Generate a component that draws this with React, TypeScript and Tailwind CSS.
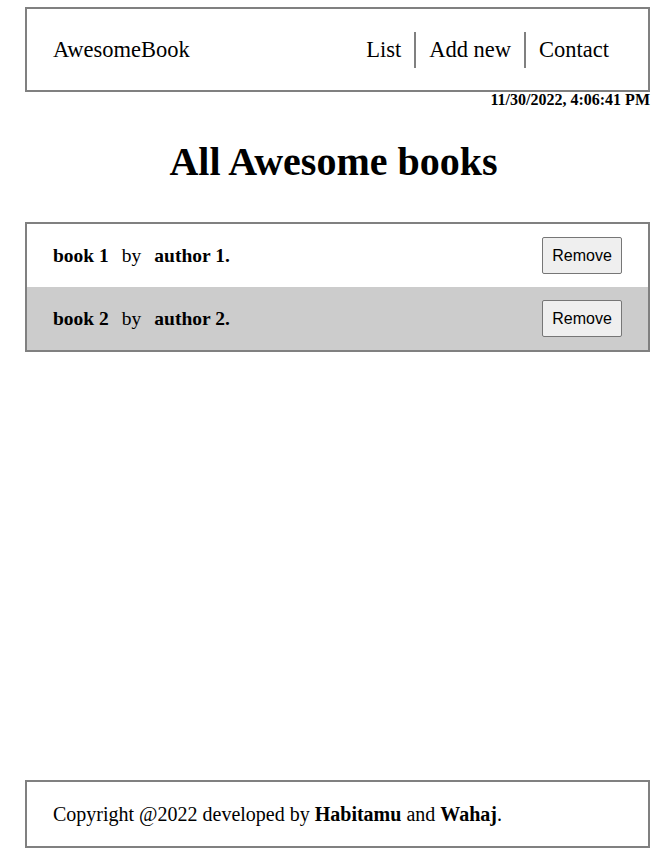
import React from 'react';

const books = [
  { title: 'book 1', author: 'author 1.' },
  { title: 'book 2', author: 'author 2.' },
];

export default function App() {
  return (
    <div className="flex h-[852px] flex-col bg-white text-black font-['Liberation_Serif',serif]">
      <header className="ml-[25px] mt-[7px] flex h-[85px] w-[625px] items-center justify-between border-2 border-[#808080] pl-[26px] pr-[39px]">
        <span className="text-[22.5px]">AwesomeBook</span>
        <nav className="flex items-center text-[22.5px]">
          <a className="pr-[13px]">List</a>
          <span className="h-[36px] w-[2px] bg-[#808080]" />
          <a className="px-[13px]">Add new</a>
          <span className="h-[36px] w-[2px] bg-[#808080]" />
          <a className="pl-[13px]">Contact</a>
        </nav>
      </header>
      <div className="w-[650px] text-right text-[16px] font-bold leading-[16px]">11/30/2022, 4:06:41 PM</div>

      <h1 className="mt-[30px] text-center text-[40px] font-bold leading-[48px]">All Awesome books</h1>

      <section className="ml-[25px] mt-[36px] w-[625px] border-2 border-[#808080]">
        {books.map((b, i) => (
          <div
            key={b.title}
            className={`flex h-[63px] items-center justify-between pl-[26px] pr-[26px] ${i % 2 === 1 ? 'bg-[#cccccc]' : 'bg-white'}`}
          >
            <p className="text-[19.5px]">
              <b>{b.title}</b>
              <span className="px-[13px]">by</span>
              <b>{b.author}</b>
            </p>
            <button className="h-[37px] w-[80px] rounded-[2px] border border-[#767676] bg-[#efefef] font-['Liberation_Sans',sans-serif] text-[16px]">
              Remove
            </button>
          </div>
        ))}
      </section>

      <footer className="mb-[4px] ml-[25px] mt-auto flex h-[68px] w-[625px] items-center border-2 border-[#808080] pl-[26px] text-[20px]">
        <p>
          Copyright @2022 developed by <b>Habitamu</b> and <b>Wahaj</b>.
        </p>
      </footer>
    </div>
  );
}
